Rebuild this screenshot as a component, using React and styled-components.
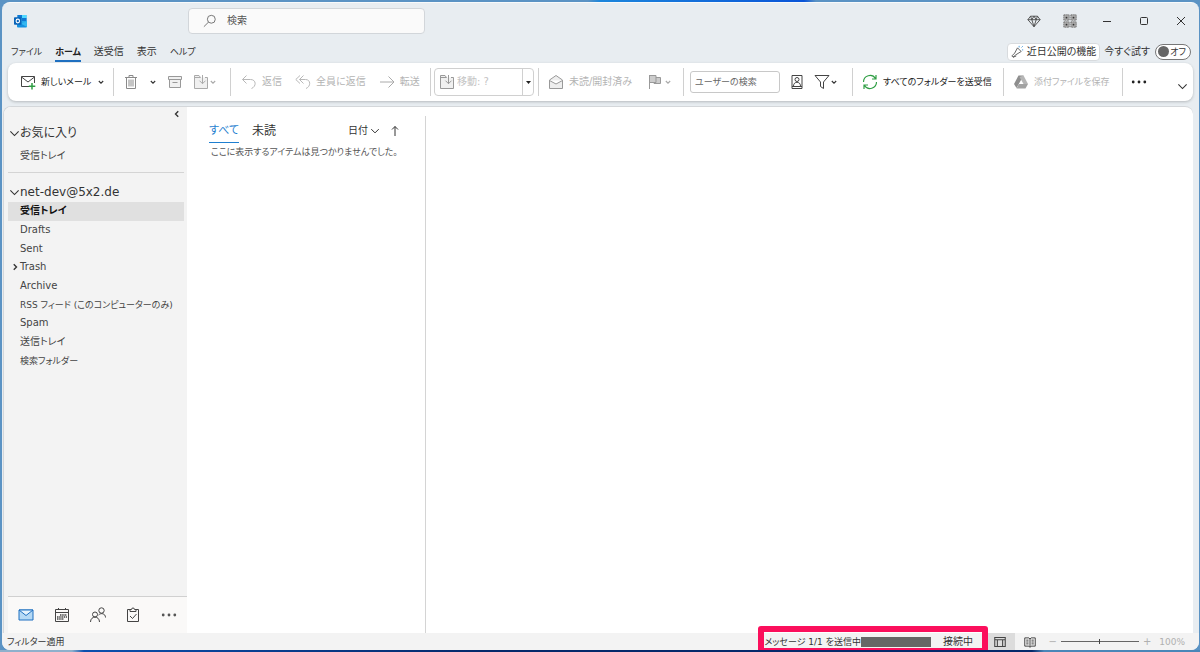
import React, { useState } from 'react';
import styled, { createGlobalStyle, css } from 'styled-components';

const GlobalStyle = createGlobalStyle`
  * {
    box-sizing: border-box;
  }

  body {
    margin: 0;
    background: #5b93c4;
    color: #333;
    font: 10px/16px 'DejaVu Sans', 'Noto Sans CJK JP', sans-serif;
    font-feature-settings: 'palt';
  }

  button,
  input,
  select {
    margin: 0;
    padding: 0;
    border: 0;
    background: none;
    color: inherit;
    font: inherit;
    font-feature-settings: inherit;
  }
`;

const Desktop = styled.div`
  display: flex;
  min-height: 100vh;
  padding: 2px 1px 2px 2px;
  background: linear-gradient(90deg, #5b93c4 49%, #1c86dc 50%, #0a55d8 67%, #5b93c4 68%) top / 100% 2px
      no-repeat,
    linear-gradient(90deg, #8fb0cc 6%, #0b4fae 7%, #04296b 40%, #04296b 86%, #4a86b8 87%) bottom /
      100% 2px no-repeat,
    #5b93c4;
`;

const Window = styled.main`
  display: flex;
  flex: 1;
  flex-direction: column;
  min-width: 0;
  overflow: hidden;
  border-top: 1px solid #f8fafb;
  border-radius: 8px;
  background: #e8edf1;
`;

const TitleBar = styled.header`
  display: flex;
  align-items: center;
  height: 35px;
  padding-left: 12px;
`;

const SearchBox = styled.label`
  display: flex;
  align-items: center;
  gap: 10px;
  width: 237px;
  height: 26px;
  margin: 0 auto 0 160px;
  padding: 0 14px;
  border: 1px solid #d2d6da;
  border-radius: 4px;
  background: #fafafa;

  input {
    flex: 1;
    min-width: 0;
    outline: 0;
  }

  input::placeholder {
    color: #555;
    opacity: 1;
  }
`;

const WindowButton = styled.button`
  display: flex;
  align-items: center;
  justify-content: center;
  width: ${({ $wide }) => ($wide ? 37 : 36)}px;
  height: 32px;
`;

const MenuBar = styled.nav`
  display: flex;
  align-items: center;
  gap: 13px;
  height: 25px;
  padding: 2px 8px 0 9px;
`;

const MenuLink = styled.a`
  height: 20px;
  border-bottom: 2px solid transparent;
  color: #333;
  font-size: ${({ $kana }) => ($kana ? 9 : 10)}px;
  line-height: 20px;
  text-decoration: none;

  ${({ $active }) =>
    $active &&
    css`
      border-color: #1f70c1;
      color: #222;
      font-weight: 700;
    `}
`;

const MenuEnd = styled.div`
  display: flex;
  align-items: center;
  gap: 4px;
  margin-left: auto;
  white-space: nowrap;
`;

const ComingSoon = styled.button`
  display: flex;
  align-items: center;
  gap: 3px;
  height: 18px;
  padding: 0 3px;
  border: 1px solid #d8dbde;
  border-radius: 4px;
  background: #fff;
`;

const Toggle = styled.label`
  display: flex;
  align-items: center;
  gap: 5px;

  input {
    position: absolute;
    opacity: 0;
  }
`;

const Track = styled.span`
  display: flex;
  flex-direction: ${({ $on }) => ($on ? 'row-reverse' : 'row')};
  align-items: center;
  justify-content: space-between;
  width: 36px;
  height: 16px;
  padding: 0 4px 0 2px;
  border: 1px solid #777;
  border-radius: 8px;
  background: #fff;
  font-size: 9px;
  line-height: 14px;

  &::before {
    flex: none;
    width: 11px;
    height: 11px;
    border-radius: 50%;
    background: #666;
    content: '';
  }
`;

const Ribbon = styled.div`
  display: flex;
  align-items: center;
  height: 38px;
  margin: 0 6px 5px;
  border-radius: 8px;
  background: #fff;
  box-shadow: 0 1px 3px rgba(0, 0, 0, 0.22);
`;

const Group = styled.div`
  display: flex;
  flex: 0 0 ${({ $width }) => $width}px;
  align-items: center;
  gap: ${({ $gap }) => $gap || 0}px;
  height: 28px;
  padding-left: ${({ $pad = 10 }) => $pad}px;
  border-right: 1px solid #d0d0d0;
  white-space: nowrap;
`;

const Command = styled.button`
  display: flex;
  align-items: center;
  gap: ${({ $tight }) => ($tight ? 0 : 5)}px;
  height: 24px;
  color: ${({ disabled }) => (disabled ? '#b4b4b4' : '#222')};
  font-size: ${({ $kana }) => ($kana ? 9 : 10)}px;
  white-space: nowrap;
`;

const MoveBox = styled.label`
  display: flex;
  align-items: center;
  gap: 2px;
  width: 100px;
  height: 28px;
  padding-left: 4px;
  border: 1px solid #d0d0d0;
  border-radius: 4px;
  color: #aaa;

  select {
    flex: 1;
    min-width: 0;
    appearance: none;
  }

  > span {
    display: flex;
    align-items: center;
    justify-content: center;
    align-self: stretch;
    width: 11px;
    border-left: 1px solid #d0d0d0;
    color: #222;
  }
`;

const PeopleSearch = styled.input`
  width: 90px;
  height: 22px;
  padding: 0 4px;
  border: 1px solid #c8c8c8;
  border-radius: 3px;
  font-size: 9px;

  &::placeholder {
    color: #666;
    opacity: 1;
  }
`;

const RibbonEnd = styled.div`
  display: flex;
  flex: 1;
  align-items: center;
  align-self: stretch;
  justify-content: space-between;
  padding: 0 5px 0 8px;
`;

const CollapseRibbon = styled.button`
  align-self: flex-end;
  height: 24px;
`;

const Content = styled.div`
  display: flex;
  flex: 1;
  margin: 0 6px 0 1px;
  overflow: hidden;
  border-top: 1px solid #d4d7da;
  border-left: 1px solid #d4d7da;
  border-radius: 8px 8px 0 0;
  background: #fff;
`;

const Sidebar = styled.aside`
  display: flex;
  flex: 0 0 183px;
  flex-direction: column;
  min-width: 0;
  padding-left: 4px;
  background: #f3f3f3;
`;

const CollapseSidebar = styled.button`
  align-self: flex-end;
  width: 20px;
  height: 18px;
  color: #333;
`;

const Section = styled.section`
  margin-right: 3px;
  padding-bottom: ${({ $divided }) => ($divided ? 7 : 0)}px;
  border-bottom: ${({ $divided }) => ($divided ? '1px solid #d4d4d4' : 0)};

  & + & {
    padding-top: 11px;
  }
`;

const SectionTitle = styled.button`
  display: flex;
  align-items: center;
  width: 100%;
  height: 16px;
  padding-left: 1px;
  font-size: 12px;
`;

const FolderList = styled.ul`
  display: grid;
  grid-auto-rows: 1fr;
  min-height: ${({ $tall }) => ($tall ? 168 : 18)}px;
  margin: ${({ $tall }) => ($tall ? 2 : 6)}px 0 0;
  padding: 0;
  list-style: none;
`;

const Folder = styled.a`
  display: grid;
  grid-template-columns: 12px 1fr;
  align-items: center;
  height: 100%;
  background: ${({ $active }) => ($active ? '#e0e0e0' : 'none')};
  color: ${({ $active }) => ($active ? '#111' : '#444')};
  font-size: ${({ $kana }) => ($kana ? 9 : 10)}px;
  font-weight: ${({ $active }) => ($active ? 700 : 400)};
  text-decoration: none;
  white-space: nowrap;

  svg {
    margin-left: 2px;
  }

  span {
    grid-column: 2;
    grid-row: 1;
  }
`;

const ModuleBar = styled.nav`
  display: flex;
  align-items: center;
  justify-content: space-between;
  height: 37px;
  margin-top: auto;
  padding: 0 9px;
  border-top: 1px solid #d0d0d0;
  background: #faf9f8;
`;

const ModuleButton = styled.button`
  display: flex;
  align-items: center;
  justify-content: center;
  width: 18px;
  height: 24px;
`;

const MessageList = styled.section`
  flex: 0 0 239px;
  min-width: 0;
  margin-top: 9px;
  padding: 3px 24px 0 22px;
  border-right: 1px solid #d4d4d4;
`;

const ListHeader = styled.div`
  display: flex;
  align-items: center;
  height: 24px;
`;

const FilterTab = styled.button`
  height: 24px;
  margin-right: 13px;
  border-bottom: 1px solid ${({ $active }) => ($active ? '#1f7fd0' : 'transparent')};
  color: ${({ $active }) => ($active ? '#1f7fd0' : '#333')};
  font-size: ${({ $kana }) => ($kana ? 11 : 12)}px;
`;

const SortButton = styled.button`
  display: flex;
  align-items: center;
  gap: 2px;
  margin-left: ${({ $push }) => ($push ? 'auto' : '9px')};
`;

const EmptyText = styled.p`
  margin: 0;
  padding: 1px 2px;
  color: #555;
  font-size: 9px;
  white-space: nowrap;
`;

const StatusBar = styled.footer`
  display: flex;
  align-items: center;
  height: 17px;
  padding: 0 14px 0 5px;
  background: #f3f3f3;
`;

const StatusText = styled.span`
  font-size: 9px;
`;

const Progress = styled.div`
  position: relative;
  display: flex;
  align-items: center;
  width: 218px;
  height: 17px;
  margin: 0 3px 0 auto;
  white-space: nowrap;

  &::after {
    position: absolute;
    inset: -7px -6px -4px;
    border: 6px solid #fb0f5c;
    border-radius: 3px;
    content: '';
    pointer-events: none;
  }
`;

const Account = styled.span`
  flex: none;
  width: 70px;
  height: 10px;
  margin-right: 12px;
  background: #666;
`;

const ViewButton = styled.button`
  display: flex;
  align-items: center;
  justify-content: center;
  width: 30px;
  height: 17px;
  background: ${({ $active }) => ($active ? '#dcdcdc' : 'none')};
`;

const Zoom = styled.label`
  display: flex;
  align-items: center;
  gap: 4px;
  margin-left: 3px;
  color: #b0b0b0;

  input {
    width: 78px;
    height: 9px;
    appearance: none;
    background: linear-gradient(#666, #666) center / 100% 1px no-repeat;
  }

  input::-webkit-slider-thumb {
    width: 1px;
    height: 5px;
    appearance: none;
    background: #444;
  }
`;

const ZoomValue = styled.span`
  margin-left: 4px;
  font-size: 9px;
`;

const Icon = ({ size = 16, color = '#444', children }) => (
  <svg
    width={size}
    height={size}
    viewBox="0 0 16 16"
    fill="none"
    stroke={color}
    strokeWidth="1"
    aria-hidden="true"
  >
    {children}
  </svg>
);

const Chevron = ({ color = '#333', size = 8, turn = 0, thin }) => (
  <svg width={size} height={size} viewBox="0 0 8 8" fill="none" stroke={color} aria-hidden="true">
    <path
      d={thin ? 'M1 2.500 4 5.500 7 2.500' : 'M1.800 3 4 5.200 6.200 3'}
      strokeWidth={thin ? 0.8 : 1.1}
      transform={`rotate(${turn} 4 4)`}
    />
  </svg>
);

const OutlookLogo = () => (
  <svg width="14" height="14" viewBox="0 0 14 14" aria-hidden="true">
    <path d="M3.500 1h9v9h-9z" fill="#28a8ea" />
    <path d="M8 1h4.500v3H8z" fill="#50d9ff" />
    <path d="M3.500 1H8v3H3.500zM8 4h4.500v3H8z" fill="#0f78d4" />
    <path d="M3 7l5 3 5-3v5.500a1 1 0 0 1-1 1H4a1 1 0 0 1-1-1z" fill="#1490df" />
    <path d="M13 7v6L7 9.800z" fill="#35b8f1" />
    <rect y="3.300" width="7.500" height="7.500" rx="0.800" fill="#0a64b8" />
    <ellipse cx="3.800" cy="7" rx="1.700" ry="1.900" fill="none" stroke="#fff" strokeWidth="1.100" />
  </svg>
);

const Dots = ({ color = '#222' }) => (
  <svg width="16" height="16" viewBox="0 0 16 16" fill={color} aria-hidden="true">
    <circle cx="2.200" cy="8" r="1.400" />
    <circle cx="8" cy="8" r="1.400" />
    <circle cx="13.800" cy="8" r="1.400" />
  </svg>
);

const MoveIcon = ({ color = '#aaa' }) => (
  <Icon color={color}>
    <path d="M7.500 3.500 6 1.500H1.500v13h13v-11H12" fill="#f0f0f0" />
    <path d="M1.500 3.500h6M9.500 1v8.500M6.500 6.700l3 3 3-3" />
  </Icon>
);

const ReplyIcon = ({ all }) => (
  <Icon color="#b8b8b8">
    {all ? (
      <path d="M5 1.500.800 5.500 5 9.500M8.500 1.500l-4 4 4 4M4.500 5.500h6c5.500 0 5.500 7 .5 9" />
    ) : (
      <path d="M5.500 1.500l-4 4 4 4M1.500 5.500h8c6 0 6 7 1 9" />
    )}
  </Icon>
);

const GRID = [1, 9];
const QrIcon = () => (
  <Icon size={14} color="#666">
    {GRID.map((x) =>
      GRID.map((y) => (
        <g key={`${x}${y}`}>
          <rect x={x} y={y} width="6" height="6" fill="#b5b5b5" strokeDasharray="2 0.500" />
          <path d={`M${x + 2} ${y + 3}h2`} stroke="#333" strokeWidth="2" />
        </g>
      ))
    )}
  </Icon>
);

const FOLDERS = [
  { name: '受信トレイ', active: true },
  { name: 'Drafts' },
  { name: 'Sent' },
  { name: 'Trash', children: true },
  { name: 'Archive' },
  { name: 'RSS フィード (このコンピューターのみ)', kana: true },
  { name: 'Spam' },
  { name: '送信トレイ' },
  { name: '検索フォルダー', kana: true }
];

const MENU = [
  { name: 'ファイル', kana: true },
  { name: 'ホーム', kana: true, active: true },
  { name: '送受信' },
  { name: '表示' },
  { name: 'ヘルプ', kana: true }
];

const Title = () => (
  <TitleBar>
    <OutlookLogo />
    <SearchBox>
      <Icon size={14} color="#666">
        <circle cx="9.500" cy="6" r="4.500" />
        <path d="M6.300 9.300 1 14.500" />
      </Icon>
      <input type="search" placeholder="検索" aria-label="検索" />
    </SearchBox>
    <WindowButton aria-label="Premium">
      <Icon size={14}>
        <path d="M4 2.500h8l3 4-7 8-7-8zM1 6.500h14M5.500 6.500 8 14.500l2.500-8L8 2.500zM4 2.500l1.500 4M12 2.500l-1.500 4" />
      </Icon>
    </WindowButton>
    <WindowButton aria-label="QR">
      <QrIcon />
    </WindowButton>
    <WindowButton $wide aria-label="最小化">
      <svg width="10" height="10" stroke="#333" aria-hidden="true">
        <path d="M1 5.500h8" />
      </svg>
    </WindowButton>
    <WindowButton $wide aria-label="最大化">
      <svg width="10" height="10" fill="none" stroke="#333" aria-hidden="true">
        <rect x="1.500" y="1.500" width="7" height="7" rx="1" />
      </svg>
    </WindowButton>
    <WindowButton $wide aria-label="閉じる">
      <svg width="10" height="10" stroke="#333" aria-hidden="true">
        <path d="M1 1l8 8M9 1 1 9" />
      </svg>
    </WindowButton>
  </TitleBar>
);

const Menu = () => {
  const [preview, setPreview] = useState(false);

  return (
    <MenuBar>
      {MENU.map(({ name, kana, active }) => (
        <MenuLink key={name} href="#" $kana={kana} $active={active}>
          {name}
        </MenuLink>
      ))}
      <MenuEnd>
        <ComingSoon type="button">
          <Icon size={13}>
            <path d="M8 3.500l4.500 4.500L6 12 2.500 15 1 13.500 4.500 10z" />
            <path d="M2.500 15l4-1.500" />
            <path d="M10 1v2M13 3l1.500-1.500M13.500 6H15" stroke="#2a8ad4" />
          </Icon>
          近日公開の機能
        </ComingSoon>
        <Toggle>
          今すぐ試す
          <input
            type="checkbox"
            role="switch"
            checked={preview}
            onChange={() => setPreview(!preview)}
          />
          <Track $on={preview}>{preview ? 'オン' : 'オフ'}</Track>
        </Toggle>
      </MenuEnd>
    </MenuBar>
  );
};

const Commands = () => (
  <Ribbon>
    <Group $width={106} $pad={12} $gap={6}>
      <Command type="button" $kana>
        <Icon>
          <path d="M9 12.500H1.500v-10h13V9M1.500 3 8 8l6.500-5" />
          <path d="M12 9v6.500M8.800 12.300h6.500" stroke="#2f9e44" strokeWidth="1.500" />
        </Icon>
        新しいメール
      </Command>
      <Chevron />
    </Group>
    <Group $width={117} $pad={9} $gap={10}>
      <Command type="button" disabled aria-label="削除">
        <Icon color="#8a8a8a">
          <path d="M2 3.500h12M6 3.500v-2h4v2M3.500 3.500v11h9v-11M6 5.500v7M8 5.500v7M10 5.500v7" />
        </Icon>
      </Command>
      <Chevron />
      <Command type="button" disabled aria-label="アーカイブ">
        <Icon color="#999">
          <path d="M1.500 2.500h13v3h-13zM2.500 5.500v8h11v-8M5.500 8.500h5" fill="#f0f0f0" />
        </Icon>
      </Command>
      <Command type="button" disabled $tight aria-label="移動">
        <MoveIcon />
        <Chevron color="#aaa" />
      </Command>
    </Group>
    <Group $width={200} $gap={13}>
      <Command type="button" disabled>
        <ReplyIcon />
        返信
      </Command>
      <Command type="button" disabled>
        <ReplyIcon all />
        全員に返信
      </Command>
      <Command type="button" disabled>
        <Icon color="#aaa">
          <path d="M1 8h14M9.500 2.500 15 8l-5.500 5.500" />
        </Icon>
        転送
      </Command>
    </Group>
    <Group $width={108} $pad={3}>
      <MoveBox>
        <MoveIcon color="#999" />
        <select disabled aria-label="移動">
          <option>移動: ?</option>
        </select>
        <span>
          <svg width="5" height="3" fill="#222" aria-hidden="true">
            <path d="M0 0h5L2.500 3z" />
          </svg>
        </span>
      </MoveBox>
    </Group>
    <Group $width={145} $pad={9} $gap={16}>
      <Command type="button" disabled>
        <Icon color="#999">
          <path d="M1.500 6 8 1.500 14.500 6v8.500h-13z" fill="#eee" />
          <path d="M1.500 6.500 8 10l6.500-3.500" fill="#fff" />
        </Icon>
        未読/開封済み
      </Command>
      <Command type="button" disabled $tight aria-label="フラグ">
        <Icon color="#999">
          <path d="M1.500 1v14M1.500 1.500H8v7H1.500M8 3.500h4.500v6H6v-1" fill="#ccc" />
        </Icon>
        <Chevron color="#aaa" />
      </Command>
    </Group>
    <Group $width={169} $pad={6} $gap={9}>
      <PeopleSearch placeholder="ユーザーの検索" aria-label="ユーザーの検索" />
      <Command type="button" aria-label="アドレス帳">
        <Icon>
          <path d="M3 1.500h10v13H3zM3 12.500h10" />
          <circle cx="8" cy="5.500" r="2" />
          <path d="M4.500 12c0-5 7-5 7 0" />
        </Icon>
      </Command>
      <Command type="button" $tight aria-label="フィルター">
        <Icon>
          <path d="M1 1.500h14L9.500 8v6.500l-3-2V8z" />
        </Icon>
        <Chevron />
      </Command>
    </Group>
    <Group $width={151} $pad={9}>
      <Command type="button" $kana>
        <Icon color="#2f9e44">
          <path
            d="M1.500 8a6.500 6.500 0 0 1 12-3.500M14.500 8a6.500 6.500 0 0 1-12 3.500M14 1v4h-4M2 15v-4h4"
            strokeWidth="1.200"
          />
        </Icon>
        すべてのフォルダーを送受信
      </Command>
    </Group>
    <Group $width={119} $pad={9}>
      <Command type="button" disabled $kana>
        <svg width="16" height="16" viewBox="0 0 16 16" aria-hidden="true">
          <path d="M5.500 1.500h5L8 6 3.500 14 1 10z" fill="#8e8e8e" />
          <path d="M10.500 1.500 15 10h-4.500L6.500 3z" fill="#b5b5b5" />
          <path d="M15 10l-2.500 4.500h-9L5.800 10z" fill="#a2a2a2" />
        </svg>
        添付ファイルを保存
      </Command>
    </Group>
    <RibbonEnd>
      <Command type="button" aria-label="その他">
        <Dots />
      </Command>
      <CollapseRibbon type="button" aria-label="リボンを折りたたむ">
        <Chevron size={11} thin />
      </CollapseRibbon>
    </RibbonEnd>
  </Ribbon>
);

const Folders = () => (
  <Sidebar>
    <CollapseSidebar type="button" aria-label="折りたたむ">
      <Chevron size={10} turn={90} />
    </CollapseSidebar>
    <Section $divided>
      <SectionTitle type="button">
        <Chevron size={11} thin />
        お気に入り
      </SectionTitle>
      <FolderList>
        <li>
          <Folder href="#">
            <span>受信トレイ</span>
          </Folder>
        </li>
      </FolderList>
    </Section>
    <Section>
      <SectionTitle type="button">
        <Chevron size={11} thin />
        net-dev@5x2.de
      </SectionTitle>
      <FolderList $tall>
        {FOLDERS.map(({ name, active, children, kana }) => (
          <li key={name}>
            <Folder href="#" $active={active} $kana={kana}>
              {children && <Chevron size={10} turn={-90} />}
              <span>{name}</span>
            </Folder>
          </li>
        ))}
      </FolderList>
    </Section>
    <ModuleBar>
      <ModuleButton type="button" aria-label="メール">
        <Icon color="#1f70c1">
          <path d="M1 3h14v10H1z" fill="#b5d9f5" />
          <path d="M1 3l7 5.500L15 3z" fill="#e4f2fc" />
        </Icon>
      </ModuleButton>
      <ModuleButton type="button" aria-label="予定表">
        <Icon>
          <path d="M1.500 2.500h13v12h-13zM1.500 5.500h13M4.500 1v2M11.500 1v2" />
          <path d="M6 8h7M3 10h10M3 12h7" strokeWidth="1.300" strokeDasharray="1.500 0.700" />
        </Icon>
      </ModuleButton>
      <ModuleButton type="button" aria-label="連絡先">
        <Icon>
          <circle cx="5" cy="7.500" r="2.500" />
          <circle cx="11.500" cy="3.500" r="2.700" />
          <path d="M.5 15c0-6.500 9-6.500 9 0M8.500 8c2.500-2.500 7-1.500 7 2.500" />
        </Icon>
      </ModuleButton>
      <ModuleButton type="button" aria-label="タスク">
        <Icon>
          <path d="M5 2.500H2.500v12h11v-12H11M5 4.500v-2h1.500a1.500 1.500 0 0 1 3 0H11v2zM5 9l2.500 2.500L11.500 7" />
        </Icon>
      </ModuleButton>
      <ModuleButton type="button" aria-label="その他">
        <Dots color="#555" />
      </ModuleButton>
    </ModuleBar>
  </Sidebar>
);

const Messages = () => (
  <MessageList>
    <ListHeader>
      <FilterTab type="button" $active $kana>
        すべて
      </FilterTab>
      <FilterTab type="button">未読</FilterTab>
      <SortButton type="button" $push>
        日付
        <Chevron size={10} thin />
      </SortButton>
      <SortButton type="button" aria-label="昇順">
        <svg width="12" height="12" viewBox="0 0 12 12" fill="none" stroke="#333" aria-hidden="true">
          <path d="M6 11V1.500M3 4.500l3-3 3 3" />
        </svg>
      </SortButton>
    </ListHeader>
    <EmptyText>ここに表示するアイテムは見つかりませんでした。</EmptyText>
  </MessageList>
);

const Status = () => (
  <StatusBar>
    <StatusText>フィルター適用</StatusText>
    <Progress>
      <StatusText>メッセージ 1/1 を送信中</StatusText>
      <Account />
      接続中
    </Progress>
    <ViewButton type="button" $active aria-label="標準">
      <Icon size={12}>
        <path d="M1 2h14v12H1zM1 5h14M4.500 5v9M11.500 5v9" strokeWidth="1.400" />
      </Icon>
    </ViewButton>
    <ViewButton type="button" aria-label="閲覧">
      <Icon size={12}>
        <path
          d="M1 2.500h5.500L8 4l1.500-1.500H15v11H9.500L8 15l-1.500-1.500H1zM8 4v11M3 5.500h3M3 8h3M3 10.500h3M10 5.500h3M10 8h3M10 10.500h3"
          strokeWidth="1.300"
        />
      </Icon>
    </ViewButton>
    <Zoom>
      −
      <input type="range" min="10" max="190" defaultValue="100" aria-label="ズーム" />
      +
      <ZoomValue>100%</ZoomValue>
    </Zoom>
  </StatusBar>
);

const App = () => (
  <React.Fragment>
    <GlobalStyle />
    <Desktop>
      <Window>
        <Title />
        <Menu />
        <Commands />
        <Content>
          <Folders />
          <Messages />
        </Content>
        <Status />
      </Window>
    </Desktop>
  </React.Fragment>
);

export default App;
